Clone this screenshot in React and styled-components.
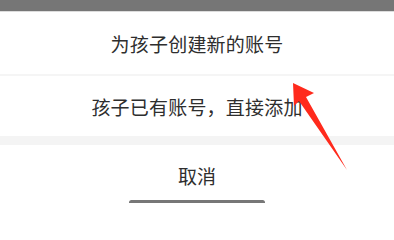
import React from 'react'
import styled, { createGlobalStyle } from 'styled-components'

const GlobalStyle = createGlobalStyle`
  html, body {
    margin: 0;
    padding: 0;
    background: #ffffff;
  }
  body {
    font-family: "Noto Sans CJK SC", "Noto Sans", sans-serif;
  }
`

const Screen = styled.div`
  position: relative;
  width: 394px;
  height: 203px;
  overflow: hidden;
  display: flex;
  flex-direction: column;
  background: #ffffff;
`

const Backdrop = styled.div`
  height: 12px;
  flex: none;
  background: #767676;
  border-bottom: 1px solid #dcdcdc;
  box-sizing: border-box;
`

const Sheet = styled.div`
  display: flex;
  flex-direction: column;
  flex: 1;
  background: #ffffff;
`

const Option = styled.div`
  height: ${p => p.$h}px;
  flex: none;
  display: flex;
  align-items: center;
  justify-content: center;
  font-size: 19px;
  color: #2e2e2e;
  letter-spacing: 0.2px;
`

const Divider = styled.div`
  height: ${p => p.$h}px;
  flex: none;
  background: ${p => p.$c};
`

const Cancel = styled.div`
  display: flex;
  flex-direction: column;
  align-items: center;
  padding-top: 18px;
  font-size: 19px;
  color: #2e2e2e;
`

const CancelText = styled.div`
  line-height: 26px;
  height: 26px;
`

const HomeBar = styled.div`
  margin-top: 11px;
  width: 136px;
  height: 5px;
  border-radius: 3px;
  background: #777777;
`

const Annotation = styled.svg`
  position: absolute;
  left: 0;
  top: 0;
  pointer-events: none;
`

export default function App() {
  return (
    <>
      <GlobalStyle />
      <Screen>
        <Backdrop />
        <Sheet>
          <Option $h={62}>为孩子创建新的账号</Option>
          <Divider $h={2} $c="#f5f5f5" />
          <Option $h={60}>孩子已有账号，直接添加</Option>
          <Divider $h={9} $c="#f4f4f4" />
          <Cancel>
            <CancelText>取消</CancelText>
            <HomeBar />
          </Cancel>
        </Sheet>
        <Annotation width="394" height="203" viewBox="0 0 394 203">
          <polygon
            points="293,83 314,93 306,97 347,170 299,101 294,106"
            fill="#ff2a1c"
          />
        </Annotation>
      </Screen>
    </>
  )
}
